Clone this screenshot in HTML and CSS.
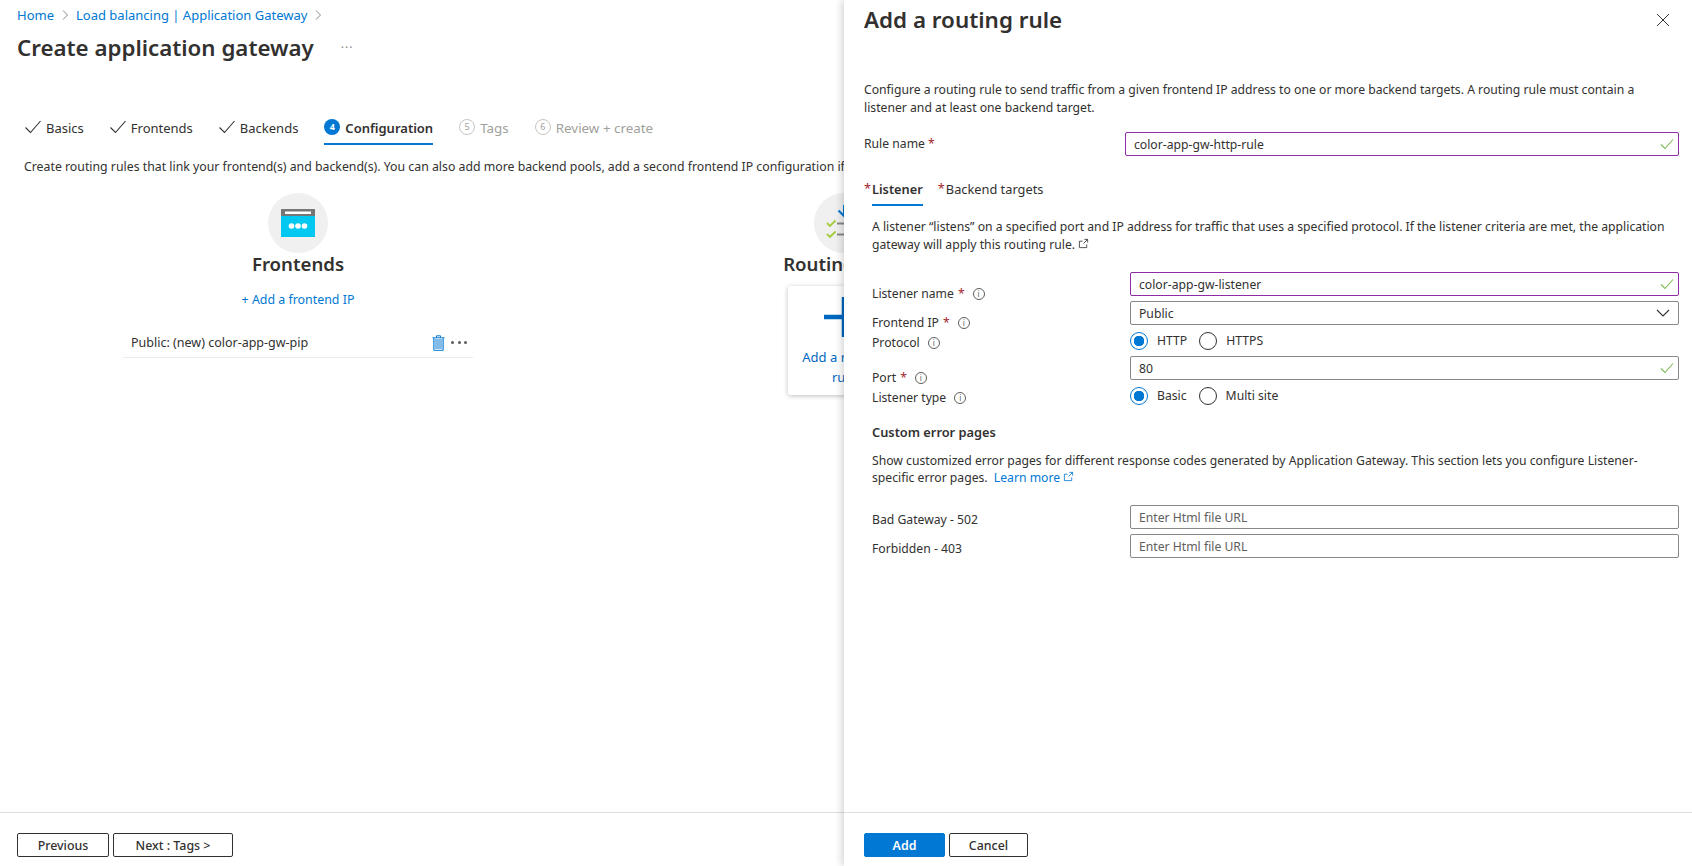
FILE: index.html
```html
<!DOCTYPE html>
<html lang="en">
<head>
    <meta charset="UTF-8">
    <title>Create application gateway</title>
    <link rel="stylesheet" href="styles.css">
</head>
<body>

    <div class="page">
        <nav class="breadcrumb">
            <a href="#">Home</a>
            <svg class="crumb-sep" viewBox="0 0 8 12"><path d="M2 1.500 6.500 6 2 10.500"/></svg>
            <a href="#">Load balancing | Application Gateway</a>
            <svg class="crumb-sep" viewBox="0 0 8 12"><path d="M2 1.500 6.500 6 2 10.500"/></svg>
        </nav>

        <div class="title-row">
            <h1>Create application gateway</h1>
            <span class="title-more">···</span>
        </div>

        <div class="wizard">
            <div class="step done"><svg class="step-check" viewBox="0 0 16 16"><path d="M.5 8.500 5.500 13.500 15.500 2"/></svg>Basics</div>
            <div class="step done"><svg class="step-check" viewBox="0 0 16 16"><path d="M.5 8.500 5.500 13.500 15.500 2"/></svg>Frontends</div>
            <div class="step done"><svg class="step-check" viewBox="0 0 16 16"><path d="M.5 8.500 5.500 13.500 15.500 2"/></svg>Backends</div>
            <div class="step current"><span class="step-num">4</span>Configuration</div>
            <div class="step todo"><span class="step-num">5</span>Tags</div>
            <div class="step todo"><span class="step-num">6</span>Review + create</div>
        </div>

        <p class="intro">Create routing rules that link your frontend(s) and backend(s). You can also add more backend pools, add a second frontend IP configuration if you haven't already, or edit existing frontends and backends.</p>

        <div class="config">
            <section class="config-col">
                <div class="config-icon">
                    <svg width="34" height="28" viewBox="0 0 34 28">
                        <rect width="34" height="28" fill="#00c8f0"/>
                        <rect width="34" height="7" fill="#767676"/>
                        <rect x="4" y="2.500" width="26" height="2.500" fill="#fff"/>
                        <circle cx="10.500" cy="17" r="2.800" fill="#fff"/>
                        <circle cx="17" cy="17" r="2.800" fill="#fff"/>
                        <circle cx="23.500" cy="17" r="2.800" fill="#fff"/>
                    </svg>
                </div>
                <h2>Frontends</h2>
                <a class="add-link" href="#">+ Add a frontend IP</a>
                <div class="config-item">
                    <span>Public: (new) color-app-gw-pip</span>
                    <svg class="trash" viewBox="0 0 13 16">
                        <path class="trash-fill" d="M2.500 4h8v10h-8z"/>
                        <path class="trash-line" d="M.5 2.800h12M4.500 2.500V.8h4v1.700M1.800 3v12.300h9.400V3"/>
                    </svg>
                    <span class="item-dots"><i></i><i></i><i></i></span>
                </div>
            </section>

            <section class="config-col">
                <div class="config-icon">
                    <svg width="36" height="36" viewBox="0 0 36 36">
                        <path class="route-arrow" d="M18 -2v13M12.500 5.500 18 11l5.500-5.500"/>
                        <path class="route-check" d="M1 18l3 3 5.500-5.500M1 29l3 3 5.500-5.500"/>
                        <path class="route-line" d="M11 18.500h14M11 29.500h14"/>
                    </svg>
                </div>
                <h2>Routing rules</h2>
                <a class="add-card" href="#">
                    <svg class="add-plus" width="40" height="40" viewBox="0 0 40 40"><path d="M0 20h40M20 0v40"/></svg>
                    <span>Add a routing rule</span>
                </a>
            </section>
        </div>

        <footer class="page-footer">
            <button class="btn">Previous</button>
            <button class="btn btn-next">Next : Tags &gt;</button>
        </footer>
    </div>

    <aside class="panel">
        <div class="panel-body">
            <div class="panel-head">
                <h2>Add a routing rule</h2>
                <svg class="panel-close" viewBox="0 0 14 14"><path d="M1 1l12 12M13 1 1 13"/></svg>
            </div>

            <p class="panel-intro">Configure a routing rule to send traffic from a given frontend IP address to one or more backend targets. A routing rule must contain a listener and at least one backend target.</p>

            <div class="rule-row">
                <label class="rule-label">Rule name <b class="req">*</b></label>
                <div class="field modified">
                    <input type="text" value="color-app-gw-http-rule">
                    <svg class="ok" viewBox="0 0 14 12"><path d="M1 6.500 5 10.500 13 1.500"/></svg>
                </div>
            </div>

            <div class="rule-tabs">
                <div class="rule-tab active"><b class="req">*</b><span>Listener</span></div>
                <div class="rule-tab"><b class="req">*</b><span>Backend targets</span></div>
            </div>

            <div class="listener">
                <p class="listener-intro">A listener “listens” on a specified port and IP address for traffic that uses a specified protocol. If the listener criteria are met, the application gateway will apply this routing rule. <svg class="ext" viewBox="0 0 12 12"><path d="M9.500 7v3.500h-8v-7H5M7 1.500h3.500V5M10.500 1.500 6 6"/></svg></p>

                <div class="form">
                    <div class="form-labels">
                        <label class="form-label first">Listener name <b class="req">*</b> <span class="info">i</span></label>
                        <label class="form-label spaced">Frontend IP <b class="req">*</b> <span class="info">i</span></label>
                        <label class="form-label">Protocol <span class="info">i</span></label>
                        <label class="form-label wide">Port <b class="req">*</b> <span class="info">i</span></label>
                        <label class="form-label">Listener type <span class="info">i</span></label>
                    </div>
                    <div class="form-controls">
                        <div class="field modified">
                            <input type="text" value="color-app-gw-listener">
                            <svg class="ok" viewBox="0 0 14 12"><path d="M1 6.500 5 10.500 13 1.500"/></svg>
                        </div>
                        <div class="field">
                            <input type="text" value="Public">
                            <svg class="caret" viewBox="0 0 14 8"><path d="M1 1l6 6 6-6"/></svg>
                        </div>
                        <div class="radios">
                            <span class="radio on"></span><span class="radio-text">HTTP</span>
                            <span class="radio"></span><span class="radio-text">HTTPS</span>
                        </div>
                        <div class="field">
                            <input type="text" value="80">
                            <svg class="ok" viewBox="0 0 14 12"><path d="M1 6.500 5 10.500 13 1.500"/></svg>
                        </div>
                        <div class="radios">
                            <span class="radio on"></span><span class="radio-text">Basic</span>
                            <span class="radio"></span><span class="radio-text">Multi site</span>
                        </div>
                    </div>
                </div>

                <h3>Custom error pages</h3>
                <p class="error-intro">Show customized error pages for different response codes generated by Application Gateway. This section lets you configure Listener-specific error pages. <a href="#">Learn more <svg class="ext" viewBox="0 0 12 12"><path d="M9.500 7v3.500h-8v-7H5M7 1.500h3.500V5M10.500 1.500 6 6"/></svg></a></p>

                <div class="form error-form">
                    <div class="form-labels">
                        <label class="form-label bad-gw">Bad Gateway - 502</label>
                        <label class="form-label forbidden">Forbidden - 403</label>
                    </div>
                    <div class="form-controls">
                        <div class="field"><input type="text" placeholder="Enter Html file URL"></div>
                        <div class="field"><input type="text" placeholder="Enter Html file URL"></div>
                    </div>
                </div>
            </div>
        </div>

        <footer class="page-footer panel-footer">
            <button class="btn btn-primary">Add</button>
            <button class="btn">Cancel</button>
        </footer>
    </aside>

</body>
</html>
```

FILE: styles.css
```css
* {
    box-sizing: border-box;
}
body {
    margin: 0;
    height: 866px;
    overflow: hidden;
    position: relative;
    background-color: #fff;
    color: #323130;
    font-family: "Noto Sans", "Open Sans", sans-serif;
    font-size: 12.3px;
    line-height: 18px;
}
a {
    color: #0078d4;
    text-decoration: none;
}
h1, h2, h3, p {
    margin: 0;
}

/* page behind the panel */
.page {
    height: 866px;
    display: flex;
    flex-direction: column;
}
.breadcrumb {
    display: flex;
    align-items: center;
    gap: 7px;
    height: 18px;
    margin: 6px 0 0 17px;
    font-size: 13px;
}
.crumb-sep {
    width: 8px;
    height: 12px;
    fill: none;
    stroke: #8a8886;
    stroke-width: 1;
}
.title-row {
    display: flex;
    align-items: center;
    height: 34px;
    margin: 7px 0 0 17px;
}
h1 {
    font-size: 22.300px;
    font-weight: 600;
    line-height: 34px;
}
.title-more {
    margin-left: 27px;
    color: #8a8886;
    font-size: 12px;
    letter-spacing: 1px;
}
.wizard {
    display: flex;
    gap: 26px;
    height: 34px;
    margin: 46px 0 0 25px;
    font-size: 13px;
}
.step {
    display: flex;
    align-items: flex-start;
    gap: 5px;
    padding-top: 8px;
}
.step-check {
    width: 16px;
    height: 16px;
    fill: none;
    stroke: #323130;
    stroke-width: 1.100;
}
.step-num {
    width: 16px;
    height: 16px;
    border-radius: 50%;
    font-size: 9px;
    font-weight: 700;
    line-height: 15px;
    text-align: center;
}
.step.current {
    font-weight: 600;
    border-bottom: 2px solid #0078d4;
}
.step.current .step-num {
    background-color: #0078d4;
    color: #fff;
}
.step.todo {
    color: #a19f9d;
    font-size: 13.400px;
}
.step.todo .step-num {
    border: 1px solid #c8c6c4;
    font-weight: 400;
    line-height: 14px;
}
.intro {
    margin: 13px 0 0 24px;
    white-space: nowrap;
}
.config {
    flex: 1;
    display: flex;
    gap: 196px;
    padding: 17px 0 0 123px;
}
.config-col {
    width: 350px;
    display: flex;
    flex-direction: column;
    align-items: center;
}
.config-icon {
    width: 60px;
    height: 60px;
    display: flex;
    align-items: center;
    justify-content: center;
    border-radius: 50%;
    background-color: #f0f0f0;
}
.config-col h2 {
    font-size: 18.600px;
    font-weight: 600;
    line-height: 22px;
}
.add-link {
    margin-top: 16px;
    font-size: 12.400px;
    line-height: 18px;
}
.config-item {
    align-self: stretch;
    display: flex;
    align-items: center;
    height: 31px;
    margin-top: 18px;
    padding: 1px 6px 0 8px;
    border-bottom: 1px solid #edebe9;
    font-size: 12.500px;
}
.config-item > span:first-child {
    flex: 1;
}
.trash {
    width: 13px;
    height: 16px;
}
.trash-fill {
    fill: #83bbe8;
}
.trash-line {
    fill: none;
    stroke: #0078d4;
    stroke-width: 1;
}
.item-dots {
    display: flex;
    gap: 3.500px;
    margin-left: 6px;
}
.item-dots i {
    width: 3px;
    height: 3px;
    border-radius: 50%;
    background-color: #605e5c;
}
.route-arrow {
    fill: none;
    stroke: #0078d4;
    stroke-width: 2;
}
.route-check {
    fill: none;
    stroke: #a4cc3a;
    stroke-width: 1.800;
}
.route-line {
    fill: none;
    stroke: #8a8886;
    stroke-width: 2.200;
}
.add-card {
    width: 112px;
    height: 109px;
    margin-top: 11px;
    display: flex;
    flex-direction: column;
    align-items: center;
    padding: 11px 10px 0;
    border-radius: 2px;
    background-color: #fff;
    box-shadow: 0 1px 5px rgba(0, 0, 0, 0.25);
    color: #0067c0;
    font-size: 13px;
    text-align: center;
    line-height: 20px;
}
.add-plus {
    flex: none;
    fill: none;
    stroke: #0067c0;
    stroke-width: 4.500;
}
.add-card span {
    margin-top: 10px;
}
.page-footer {
    flex: none;
    display: flex;
    gap: 4px;
    height: 54px;
    padding: 20px 0 0 17px;
    border-top: 1px solid #e1dfdd;
}
.btn {
    width: 92px;
    height: 24px;
    padding: 0;
    border: 1px solid #323130;
    border-radius: 2px;
    background-color: #fff;
    color: #323130;
    font-family: inherit;
    font-size: 12.400px;
    font-weight: 500;
}
.btn-next {
    width: 120px;
}

/* routing rule blade */
.panel {
    position: absolute;
    top: 0;
    right: 0;
    bottom: 0;
    width: 848px;
    display: flex;
    flex-direction: column;
    background-color: #fff;
    box-shadow: -2px 0 8px rgba(0, 0, 0, 0.18);
    font-size: 12.200px;
}
.panel-body {
    flex: 1;
    padding: 4px 13px 0 20px;
}
.panel-head {
    display: flex;
    justify-content: space-between;
    align-items: flex-start;
}
.panel-head h2 {
    font-size: 22.400px;
    font-weight: 600;
    line-height: 32px;
}
.panel-close {
    width: 14px;
    height: 14px;
    margin: 9px 9px 0 0;
    fill: none;
    stroke: #323130;
    stroke-width: 1;
}
.panel-intro {
    margin-top: 45px;
    line-height: 18px;
}
.rule-row {
    display: flex;
    margin-top: 15px;
}
.rule-label {
    width: 261px;
    line-height: 24px;
}
.req {
    color: #a4262c;
    font-weight: 400;
}
.field {
    flex: 1;
    display: flex;
    align-items: center;
    height: 24px;
    padding-right: 4px;
    border: 1px solid #8a8886;
    border-radius: 2px;
}
.field.modified {
    border-color: #8f2ba6;
}
.field input {
    flex: 1;
    min-width: 0;
    padding: 1px 8px 0;
    border: 0;
    outline: 0;
    background: none;
    color: #323130;
    font: inherit;
}
.field input::placeholder {
    color: #605e5c;
    opacity: 1;
}
.ok {
    width: 14px;
    height: 12px;
    fill: none;
    stroke: #7dbb57;
    stroke-width: 1.100;
}
.caret {
    width: 14px;
    height: 8px;
    margin-right: 4px;
    fill: none;
    stroke: #323130;
    stroke-width: 1.100;
}
.rule-tabs {
    display: flex;
    gap: 15px;
    margin-top: 24px;
    font-size: 12.800px;
}
.rule-tab {
    display: flex;
    height: 26px;
}
.rule-tab .req {
    width: 8px;
    margin-top: -1px;
}
.rule-tab.active span {
    font-weight: 600;
    border-bottom: 2px solid #0078d4;
}
.listener {
    padding-left: 8px;
}
.listener-intro {
    margin-top: 12px;
}
.ext {
    display: inline-block;
    width: 11px;
    height: 11px;
    vertical-align: 0;
    fill: none;
    stroke: currentColor;
    stroke-width: 0.900;
}
.form {
    display: flex;
    margin-top: 18px;
}
.form-labels {
    flex: none;
    width: 258px;
    display: flex;
    flex-direction: column;
}
.form-label {
    display: flex;
    align-items: center;
    gap: 4px;
    height: 20px;
}
.form-label.first {
    margin-top: 12px;
}
.form-label.spaced {
    margin-top: 9px;
}
.form-label.wide {
    margin-top: 15px;
}
.info {
    width: 12px;
    height: 12px;
    margin-left: 4px;
    border: 1px solid #605e5c;
    border-radius: 50%;
    color: #605e5c;
    font-size: 8px;
    line-height: 10px;
    text-align: center;
}
.form-controls {
    flex: 1;
    display: flex;
    flex-direction: column;
}
.form-controls .field {
    flex: none;
}
.form-controls .field + .field {
    margin-top: 5px;
}
.radios {
    display: flex;
    align-items: center;
    height: 26px;
    margin: 3px 0 2px;
}
.radio {
    width: 18px;
    height: 18px;
    border: 1px solid #323130;
    border-radius: 50%;
}
.radio.on {
    border-color: #0078d4;
    background: radial-gradient(circle, #0078d4 0 5px, #fff 5.500px);
}
.radio-text {
    margin: 0 12px 0 9px;
}
h3 {
    margin-top: 12px;
    font-size: 12.800px;
    font-weight: 600;
    line-height: 18px;
}
.error-intro {
    margin-top: 11px;
    line-height: 17px;
}
.error-intro a {
    margin-left: 3px;
}
.error-form {
    margin-top: 19px;
}
.form-label.bad-gw {
    margin-top: 5px;
}
.form-label.forbidden {
    margin-top: 9px;
}
.panel-footer {
    padding-left: 20px;
}
.btn-primary {
    width: 81px;
    border-color: #0078d4;
    background-color: #0078d4;
    color: #fff;
    font-weight: 600;
}
.panel-footer .btn + .btn {
    width: 79px;
}
```
